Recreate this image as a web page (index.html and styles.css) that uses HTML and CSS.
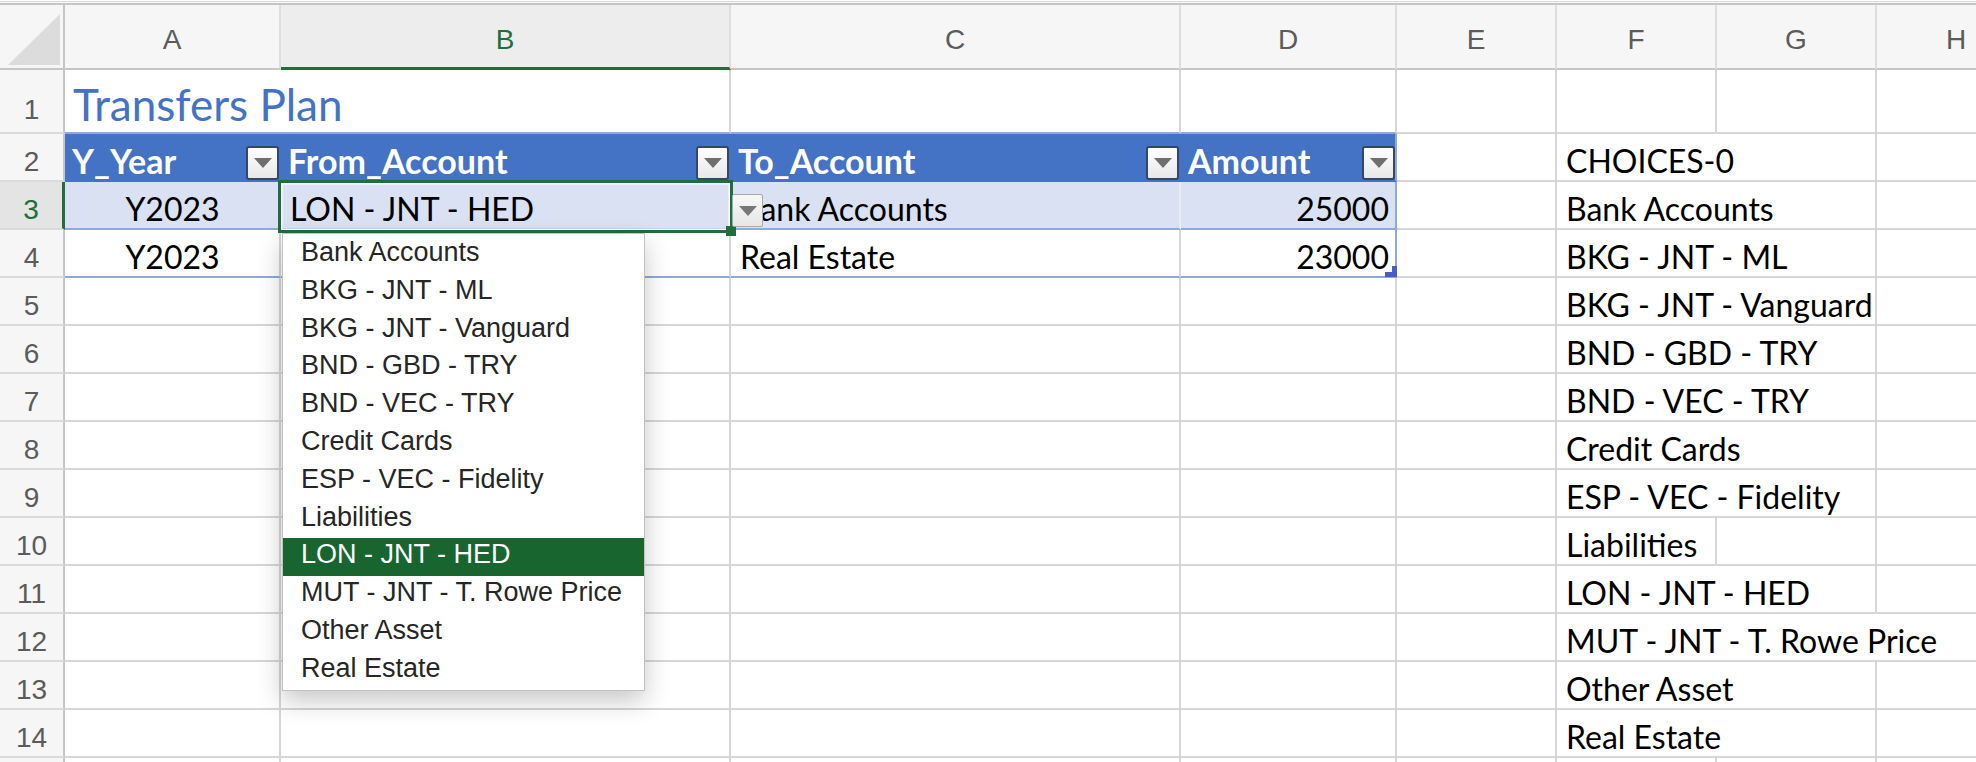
FILE: index.html
```html
<!DOCTYPE html>
<html>
<head>
<meta charset="utf-8">
<title>Transfers Plan</title>
<link rel="stylesheet" href="styles.css">
</head>
<body>
<div class="app">
  <div class="topbar"></div>

  <div class="row colhead">
    <div class="corner"><svg width="63" height="63" viewBox="0 0 63 63"><polygon points="8,60 60,9 60,60" fill="#dcdcdc"/></svg></div>
    <div class="ch">A</div>
    <div class="ch sel">B</div>
    <div class="ch">C</div>
    <div class="ch">D</div>
    <div class="ch">E</div>
    <div class="ch">F</div>
    <div class="ch">G</div>
    <div class="ch">H</div>
  </div>

  <div class="row r1">
    <div class="rh rh1">1</div>
    <div class="cell title span2 tabtop">Transfers Plan</div>
    <div class="cell tabtop"></div>
    <div class="cell tabtop"></div>
    <div class="cell"></div>
    <div class="cell"></div>
    <div class="cell"></div>
    <div class="cell"></div>
  </div>

  <div class="row rn">
    <div class="rh">2</div>
    <div class="cell th"><span class="lbl">Y_Year</span><span class="fbtn"><svg width="18" height="10" viewBox="0 0 18 10"><path d="M0 0H18L9 10Z" fill="#6f6f6f"/></svg></span></div>
    <div class="cell th"><span class="lbl">From_Account</span><span class="fbtn"><svg width="18" height="10" viewBox="0 0 18 10"><path d="M0 0H18L9 10Z" fill="#6f6f6f"/></svg></span></div>
    <div class="cell th"><span class="lbl">To_Account</span><span class="fbtn"><svg width="18" height="10" viewBox="0 0 18 10"><path d="M0 0H18L9 10Z" fill="#6f6f6f"/></svg></span></div>
    <div class="cell th tabend"><span class="lbl">Amount</span><span class="fbtn"><svg width="18" height="10" viewBox="0 0 18 10"><path d="M0 0H18L9 10Z" fill="#6f6f6f"/></svg></span></div>
    <div class="cell"></div>
    <div class="cell span2">CHOICES-0</div>
    <div class="cell"></div>
  </div>

  <div class="row rn">
    <div class="rh sel">3</div>
    <div class="cell band center">Y2023</div>
    <div class="cell band">LON - JNT - HED</div>
    <div class="cell band">Bank Accounts</div>
    <div class="cell band right tabend">25000</div>
    <div class="cell"></div>
    <div class="cell span2">Bank Accounts</div>
    <div class="cell"></div>
  </div>

  <div class="row rn">
    <div class="rh">4</div>
    <div class="cell tbody center">Y2023</div>
    <div class="cell tbody"></div>
    <div class="cell tbody">Real Estate</div>
    <div class="cell tbody right tabend">23000</div>
    <div class="cell"></div>
    <div class="cell span2">BKG - JNT - ML</div>
    <div class="cell"></div>
  </div>

  <div class="row rn">
    <div class="rh">5</div>
    <div class="cell"></div><div class="cell"></div><div class="cell"></div><div class="cell"></div><div class="cell"></div>
    <div class="cell span2">BKG - JNT - Vanguard</div>
    <div class="cell"></div>
  </div>

  <div class="row rn">
    <div class="rh">6</div>
    <div class="cell"></div><div class="cell"></div><div class="cell"></div><div class="cell"></div><div class="cell"></div>
    <div class="cell span2">BND - GBD - TRY</div>
    <div class="cell"></div>
  </div>

  <div class="row rn">
    <div class="rh">7</div>
    <div class="cell"></div><div class="cell"></div><div class="cell"></div><div class="cell"></div><div class="cell"></div>
    <div class="cell span2">BND - VEC - TRY</div>
    <div class="cell"></div>
  </div>

  <div class="row rn">
    <div class="rh">8</div>
    <div class="cell"></div><div class="cell"></div><div class="cell"></div><div class="cell"></div><div class="cell"></div>
    <div class="cell span2">Credit Cards</div>
    <div class="cell"></div>
  </div>

  <div class="row rn">
    <div class="rh">9</div>
    <div class="cell"></div><div class="cell"></div><div class="cell"></div><div class="cell"></div><div class="cell"></div>
    <div class="cell span2">ESP - VEC - Fidelity</div>
    <div class="cell"></div>
  </div>

  <div class="row rn">
    <div class="rh">10</div>
    <div class="cell"></div><div class="cell"></div><div class="cell"></div><div class="cell"></div><div class="cell"></div>
    <div class="cell">Liabilities</div>
    <div class="cell"></div>
    <div class="cell"></div>
  </div>

  <div class="row rn">
    <div class="rh">11</div>
    <div class="cell"></div><div class="cell"></div><div class="cell"></div><div class="cell"></div><div class="cell"></div>
    <div class="cell span2">LON - JNT - HED</div>
    <div class="cell"></div>
  </div>

  <div class="row rn">
    <div class="rh">12</div>
    <div class="cell"></div><div class="cell"></div><div class="cell"></div><div class="cell"></div><div class="cell"></div>
    <div class="cell span3">MUT - JNT - T. Rowe Price</div>
  </div>

  <div class="row rn">
    <div class="rh">13</div>
    <div class="cell"></div><div class="cell"></div><div class="cell"></div><div class="cell"></div><div class="cell"></div>
    <div class="cell span2">Other Asset</div>
    <div class="cell"></div>
  </div>

  <div class="row rn">
    <div class="rh">14</div>
    <div class="cell"></div><div class="cell"></div><div class="cell"></div><div class="cell"></div><div class="cell"></div>
    <div class="cell span2">Real Estate</div>
    <div class="cell"></div>
  </div>

  <div class="row rn">
    <div class="rh"></div>
    <div class="cell"></div><div class="cell"></div><div class="cell"></div><div class="cell"></div><div class="cell"></div>
    <div class="cell"></div><div class="cell"></div><div class="cell"></div>
  </div>

  <!-- overlays -->
  <div class="selection"></div>
  <div class="fillhandle"></div>
  <div class="dvbtn"><svg width="18" height="10" viewBox="0 0 18 10"><path d="M0 0H18L9 10Z" fill="#777"/></svg></div>
  <div class="resize"></div>

  <div class="dropdown">
    <div class="opt">Bank Accounts</div>
    <div class="opt">BKG - JNT - ML</div>
    <div class="opt">BKG - JNT - Vanguard</div>
    <div class="opt">BND - GBD - TRY</div>
    <div class="opt">BND - VEC - TRY</div>
    <div class="opt">Credit Cards</div>
    <div class="opt">ESP - VEC - Fidelity</div>
    <div class="opt">Liabilities</div>
    <div class="opt active">LON - JNT - HED</div>
    <div class="opt">MUT - JNT - T. Rowe Price</div>
    <div class="opt">Other Asset</div>
    <div class="opt">Real Estate</div>
  </div>
</div>
</body>
</html>
```

FILE: styles.css
```css
* { box-sizing: border-box; }
html, body { margin: 0; padding: 0; }
body {
  width: 1976px;
  height: 762px;
  overflow: hidden;
  background: #fff;
  font-family: "Lato", "Liberation Sans", sans-serif;
}
.app {
  position: relative;
  width: 1976px;
  height: 762px;
  overflow: hidden;
}
.topbar {
  height: 5px;
  background: linear-gradient(#ffffff 0, #ffffff 1px, #d8d8d8 1px, #d8d8d8 2px, #fafafa 2px, #fafafa 3px, #c4c4c4 3px, #c4c4c4 5px);
}
.row {
  display: grid;
  grid-template-columns: 65px 216px 450px 450px 216px 160px 160px 160px 160px;
  width: 2037px;
}
.colhead { height: 65px; }
.r1 { height: 64px; }
.rn { height: 48px; }

.corner {
  background: #f6f6f6;
  border-right: 2px solid #c6c6c6;
  border-bottom: 2px solid #c6c6c6;
}
.corner svg { display: block; }

.ch {
  background: #f6f6f6;
  border-right: 2px solid #dedede;
  border-bottom: 2px solid #c6c6c6;
  display: flex;
  align-items: center;
  justify-content: center;
  padding-top: 7px;
  font-family: "Liberation Sans", sans-serif;
  font-size: 28px;
  color: #5b5b5b;
}
.ch.sel {
  background: #ededed;
  color: #1e6e3e;
  border-bottom: 3px solid #1e6e3e;
}

.rh {
  background: #f6f6f6;
  border-right: 2px solid #c6c6c6;
  border-bottom: 2px solid #dadada;
  display: flex;
  align-items: flex-end;
  justify-content: center;
  padding-bottom: 4.5px;
  font-family: "Liberation Sans", sans-serif;
  font-size: 28px;
  line-height: 1;
  color: #5b5b5b;
}
.rh1 { padding-bottom: 8px; }
.rh.sel {
  background: #e4e4e4;
  color: #1e6e3e;
  border-right: 3px solid #1e6e3e;
}

.cell {
  border-right: 2px solid #d6d6d6;
  border-bottom: 2px solid #d6d6d6;
  display: flex;
  align-items: flex-end;
  padding: 0 8px 3px 9px;
  white-space: nowrap;
  font-size: 32px;
  line-height: 1;
  color: #000;
  min-width: 0;
}
.span2 { grid-column: span 2; }
.span3 { grid-column: span 3; }
.center { justify-content: center; }
.right { justify-content: flex-end; padding-right: 6px; }

.title {
  font-size: 44px;
  color: #4472c4;
  padding-bottom: 6px;
  padding-left: 8px;
}
.tabtop { border-bottom-color: #8eaadb; }

.th {
  background: #4472c4;
  color: #fff;
  font-weight: 700;
  font-size: 34px;
  border-right-color: #4472c4;
  border-bottom-color: #4472c4;
  padding: 0 0 0 7px;
  justify-content: space-between;
}
.th .lbl { padding-bottom: 2.5px; }
.fbtn {
  width: 33px;
  height: 34px;
  border: 2px solid #38465f;
  border-radius: 3px;
  background: linear-gradient(#ffffff, #e8e8e8);
  display: flex;
  align-items: center;
  justify-content: center;
  flex: none;
}
.fbtn svg { display: block; }

.band {
  background: #d9e1f2;
  border-right-color: #e8ecf6;
  border-bottom-color: #8eaadb;
}
.tbody { border-bottom-color: #8eaadb; }
.tabend { border-right-color: #8eaadb; }

/* overlays */
.selection {
  position: absolute;
  left: 278px;
  top: 180px;
  width: 455px;
  height: 53px;
  border: 3.5px solid #1e6e3e;
  box-shadow: inset 0 0 0 1.5px #ffffff;
}
.fillhandle {
  position: absolute;
  left: 726px;
  top: 226px;
  width: 10px;
  height: 10px;
  background: #1e6e3e;
}
.dvbtn {
  position: absolute;
  left: 732px;
  top: 194px;
  width: 31px;
  height: 33px;
  border: 1.5px solid #a9a9a9;
  border-radius: 2px;
  background: linear-gradient(#f8f8f8, #e6e6e6);
  display: flex;
  align-items: center;
  justify-content: center;
}
.dvbtn svg { display: block; }
.resize {
  position: absolute;
  left: 1385px;
  top: 266px;
  width: 12px;
  height: 11px;
  border-right: 5px solid #4b5dc4;
  border-bottom: 5px solid #4b5dc4;
}

.dropdown {
  position: absolute;
  left: 282px;
  top: 233px;
  width: 363px;
  padding: 2px 0 0;
  background: #fff;
  border: 1px solid #c2c2c2;
  box-shadow: 0 10px 24px rgba(0, 0, 0, 0.22);
  font-family: "Liberation Sans", sans-serif;
  font-size: 27px;
  color: #262626;
}
.opt {
  height: 37.8px;
  line-height: 33.4px;
  padding-left: 18px;
  white-space: nowrap;
}
.opt.active {
  background: #196530;
  color: #fff;
}
```
